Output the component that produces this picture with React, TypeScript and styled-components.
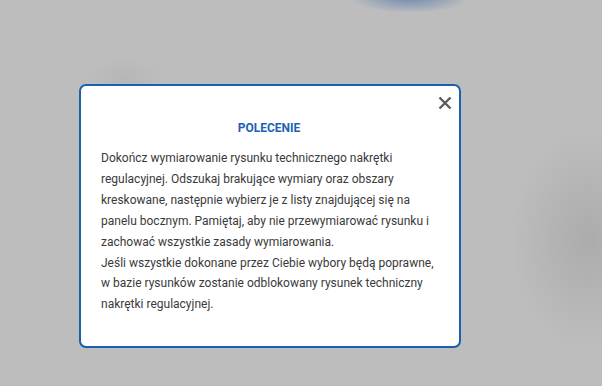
import React from "react";
import styled, { createGlobalStyle } from "styled-components";

const GlobalStyle = createGlobalStyle`
  html, body {
    margin: 0;
    padding: 0;
  }
  body {
    font-family: Roboto, "Liberation Sans", Arial, sans-serif;
  }
`;

const Backdrop = styled.div`
  width: 602px;
  height: 386px;
  box-sizing: border-box;
  padding: 84px 0 0 79px;
  overflow: hidden;
  background:
    radial-gradient(ellipse 60px 16px at 410px -3px, rgba(80, 120, 170, 0.75), rgba(80, 120, 170, 0) 100%),
    radial-gradient(ellipse 80px 110px at 590px 240px, rgba(160, 160, 160, 0.6), rgba(160, 160, 160, 0) 100%),
    radial-gradient(ellipse 40px 20px at 125px 78px, rgba(172, 172, 172, 0.4), rgba(172, 172, 172, 0) 100%),
    #bdbdbd;
`;

const Modal = styled.div`
  width: 382px;
  height: 264px;
  box-sizing: border-box;
  background: #ffffff;
  border: 2px solid #1b5fae;
  border-radius: 7px;
  padding: 0 22px 0 20px;
  display: flex;
  flex-direction: column;
  align-items: stretch;
`;

const Header = styled.div`
  display: flex;
  justify-content: flex-end;
  height: 28px;
  margin-right: -18px;
  padding-top: 7px;
  box-sizing: border-box;
`;

const CloseButton = styled.button`
  width: 20px;
  height: 20px;
  padding: 0;
  border: none;
  background: none;
  display: flex;
  align-items: center;
  justify-content: center;
  cursor: pointer;
`;

const Title = styled.h2`
  margin: 0;
  margin-top: 6px;
  text-align: center;
  font-size: 12px;
  font-weight: 700;
  color: #1b63b2;
  line-height: 16px;
`;

const Body = styled.p`
  margin: 12px 0 0;
  font-size: 12px;
  line-height: 20.9px;
  color: #3a3a3a;
`;

export default function App() {
  return (
    <>
      <GlobalStyle />
      <Backdrop>
        <Modal>
          <Header>
            <CloseButton aria-label="Zamknij">
              <svg width="14" height="14" viewBox="0 0 14 14">
                <path
                  d="M1.5 1.5 L12.5 12.5 M12.5 1.5 L1.5 12.5"
                  stroke="#5b5b5b"
                  strokeWidth="2.4"
                  strokeLinecap="butt"
                />
              </svg>
            </CloseButton>
          </Header>
          <Title>POLECENIE</Title>
          <Body>
            Dokończ wymiarowanie rysunku technicznego nakrętki regulacyjnej. Odszukaj
            brakujące wymiary oraz obszary kreskowane, następnie wybierz je z listy
            znajdującej się na panelu bocznym. Pamiętaj, aby nie przewymiarować rysunku i
            zachować wszystkie zasady wymiarowania.
            <br />
            Jeśli wszystkie dokonane przez Ciebie wybory będą poprawne, w bazie rysunków
            zostanie odblokowany rysunek techniczny nakrętki regulacyjnej.
          </Body>
        </Modal>
      </Backdrop>
    </>
  );
}
